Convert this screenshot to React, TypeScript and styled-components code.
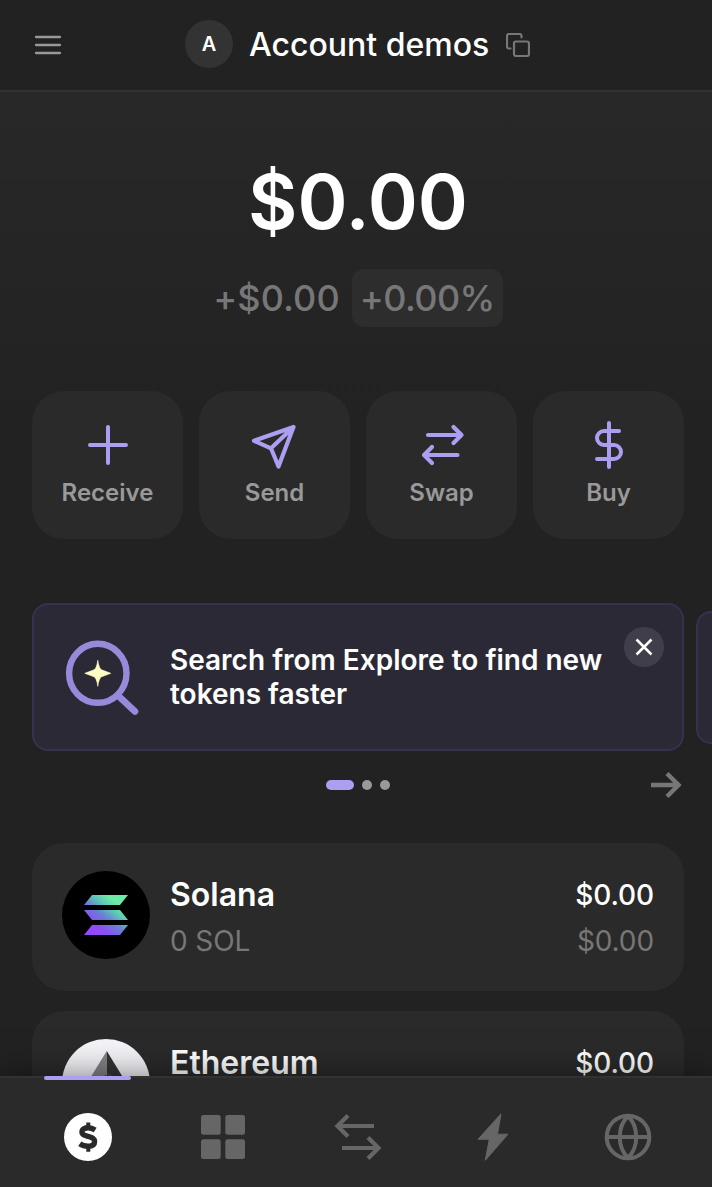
import React from 'react';
import styled, { createGlobalStyle } from 'styled-components';

const GlobalStyle = createGlobalStyle`
  * { box-sizing: border-box; }
  body { margin: 0; background: #222222; overflow: hidden; }
  button { border: 0; padding: 0; background: none; font: inherit; color: inherit; display: flex; }
  svg { display: block; flex: none; }
`;

const Screen = styled.div`
  width: 712px;
  height: 1187px;
  display: flex;
  flex-direction: column;
  overflow: hidden;
  background: #222222;
  color: #ffffff;
  font-family: Inter, "Liberation Sans", sans-serif;
`;

const Header = styled.header`
  height: 92px;
  flex: none;
  display: grid;
  grid-template-columns: 96px 1fr 96px;
  align-items: center;
  border-bottom: 2px solid #323232;
`;

const MenuButton = styled.button`
  padding-left: 34px;
`;

const Account = styled.div`
  display: flex;
  align-items: center;
  padding-left: 89px;
  padding-bottom: 2px;
`;

const Avatar = styled.span`
  width: 48px;
  height: 48px;
  border-radius: 50%;
  background: #333333;
  display: flex;
  align-items: center;
  justify-content: center;
  font-size: 20px;
  font-weight: 600;
`;

const AccountName = styled.h1`
  margin: 2px 17px 0 16px;
  width: 240px;
  white-space: nowrap;
  font-size: 32px;
  line-height: 40px;
  font-weight: 500;
`;

const CopyButton = styled.button`
  padding-top: 2px;
`;

const Content = styled.main`
  flex: 1;
  min-height: 0;
  overflow: hidden;
  padding: 0 28px 0 32px;
  background: linear-gradient(#282828, #222222 330px);
`;

const Balance = styled.section`
  display: flex;
  flex-direction: column;
  align-items: center;
  padding-top: 61px;
`;

const Total = styled.div`
  font-size: 76px;
  line-height: 96px;
  font-weight: 600;
`;

const Change = styled.div`
  margin-top: 20px;
  display: flex;
  align-items: center;
  gap: 12px;
  color: #777777;
  font-size: 36px;
  line-height: 58px;
  font-weight: 450;
  letter-spacing: 0.1px;
`;

const Percent = styled.span`
  width: 151px;
  text-align: center;
  border-radius: 12px;
  background: #2d2d2d;
  letter-spacing: -0.6px;
`;

const Actions = styled.div`
  margin-top: 64px;
  display: grid;
  grid-template-columns: repeat(4, 1fr);
  gap: 16px;
`;

const ActionCard = styled.button`
  height: 148px;
  border-radius: 32px;
  background: #2a2a2a;
  flex-direction: column;
  align-items: center;
  padding-top: 30px;
  color: #999999;
  font-size: 24px;
  line-height: 30px;
  font-weight: 600;

  svg { margin-bottom: 9px; }
`;

const Carousel = styled.div`
  margin-top: 64px;
  width: 680px;
  display: flex;
  align-items: center;
  gap: 12px;
`;

const Banner = styled.article`
  width: 652px;
  height: 148px;
  flex: none;
  display: flex;
  border: 2px solid #38304f;
  border-radius: 16px;
  background: #2c2937;
  padding: 22px 18px 0 30px;
`;

const NextBanner = styled.div`
  width: 600px;
  height: 133px;
  flex: none;
  border: 2px solid #38304f;
  border-radius: 15px;
  background: #2c2937;
`;

const BannerText = styled.p`
  margin: 16px 0 0 26px;
  width: 456px;
  font-size: 28px;
  line-height: 34px;
  font-weight: 600;
`;

const CloseButton = styled.button`
  width: 40px;
  height: 40px;
  border-radius: 50%;
  background: #413e4b;
  align-items: center;
  justify-content: center;
`;

const Pager = styled.div`
  height: 68px;
  display: grid;
  grid-template-columns: 1fr auto 1fr;
  align-items: center;
`;

const Dots = styled.div`
  grid-column: 2;
  display: flex;
  gap: 8px;
`;

const Dot = styled.span<{ $active?: boolean }>`
  width: ${(p) => (p.$active ? 28 : 10)}px;
  height: 10px;
  border-radius: 5px;
  background: ${(p) => (p.$active ? '#ab9ff2' : '#999999')};
`;

const NextButton = styled.button`
  justify-self: end;
`;

const TokenList = styled.div`
  margin-top: 24px;
  display: flex;
  flex-direction: column;
  gap: 20px;
`;

const TokenRow = styled.div`
  height: 148px;
  border-radius: 32px;
  background: #2a2a2a;
  display: flex;
  align-items: flex-start;
  padding: 28px 30px 0;
`;

const TokenInfo = styled.div<{ $end?: boolean }>`
  display: flex;
  flex-direction: column;
  gap: 10px;
  padding-top: 6px;
  ${(p) => (p.$end ? 'margin-left: auto; align-items: flex-end;' : 'margin-left: 20px;')}
`;

const TokenName = styled.div`
  font-size: 32px;
  line-height: 36px;
  font-weight: 600;
`;

const TokenValue = styled.div`
  font-size: 28px;
  line-height: 36px;
  font-weight: 500;
  letter-spacing: -0.1px;
`;

const TokenMuted = styled.div`
  font-size: 28px;
  line-height: 36px;
  font-weight: 400;
  letter-spacing: -0.1px;
  color: #777777;
`;

const Nav = styled.nav`
  position: relative;
  height: 111px;
  flex: none;
  display: grid;
  grid-template-columns: repeat(5, 135px);
  padding-left: 20px;
  border-top: 2px solid #323232;
  background: #2a2a2a;
  box-shadow: 0 0 32px rgba(0, 0, 0, 0.5);
`;

const Tab = styled.button`
  position: relative;
  justify-content: center;
  padding-top: 35px;
`;

const Indicator = styled.span`
  position: absolute;
  top: -2px;
  left: 24px;
  width: 87px;
  height: 4px;
  border-radius: 2px;
  background: #ab9ff2;
`;

const Stroke = ({ size = 48, width = 4, color = '#ab9ff2', cap = 'round', children }: {
  size?: number; width?: number; color?: string; cap?: 'round' | 'butt'; children: React.ReactNode;
}) => (
  <svg width={size} height={size} viewBox={`0 0 ${size} ${size}`} fill="none" stroke={color}
    strokeWidth={width} strokeLinecap={cap} strokeLinejoin={cap === 'round' ? 'round' : 'miter'}>
    {children}
  </svg>
);

const actions = [
  { label: 'Receive', icon: <path d="M24 6v36M6 24h36" /> },
  { label: 'Send', icon: <path d="M42.500 6L3 19.800L20 27.300L27.500 45.500zM20 27.300L42.500 6" strokeWidth="4.200" /> },
  { label: 'Swap', icon: <path d="M10 14H43.500M35.500 6l8 8l-8 8M39.500 34H6M14 26l-8 8l8 8" strokeWidth="4.200" /> },
  { label: 'Buy', icon: <path d="M24 2v44M34 10H19a7 7 0 0 0 0 14h10a7 7 0 0 1 0 14H12" /> },
];

const SolanaLogo = () => (
  <svg width="88" height="88" viewBox="0 0 88 88">
    <defs>
      <linearGradient id="sol" gradientUnits="userSpaceOnUse" x1="27" y1="66" x2="60" y2="24">
        <stop offset="0.1" stopColor="#9945ff" />
        <stop offset="0.28" stopColor="#8752f3" />
        <stop offset="0.48" stopColor="#6b7fd6" />
        <stop offset="0.66" stopColor="#5fc8b5" />
        <stop offset="0.82" stopColor="#6ceaa6" />
      </linearGradient>
    </defs>
    <circle cx="44" cy="44" r="44" fill="#000" />
    <path fill="url(#sol)" d="M30 24h36l-8 10H22zM22 39h36l8 10H30zM30 54h36l-8 10H22z" />
  </svg>
);

const EthereumLogo = () => (
  <svg width="88" height="88" viewBox="0 0 88 88">
    <circle cx="44" cy="44" r="44" fill="#f3f3f8" />
    <path fill="#828384" d="M44.800 12v22.500L24.500 45z" />
    <path fill="#343434" d="M44.800 12l20.200 33l-20.200-10.500z" />
    <path fill="#2f3030" d="M44.800 34.500l20.200 10.500l-20.200 12z" />
    <path fill="#5f5f60" d="M44.800 34.500L24.500 45l20.300 12z" />
    <path fill="#828384" d="M44.800 61v16L24.500 49z" />
    <path fill="#343434" d="M44.800 61v16L65 49z" />
  </svg>
);

const tokens = [
  { name: 'Solana', value: '$0.00', amount: '0 SOL', change: '$0.00', logo: <SolanaLogo /> },
  { name: 'Ethereum', value: '$0.00', logo: <EthereumLogo /> },
];

const SearchIllustration = () => (
  <svg width="80" height="92" viewBox="0 0 80 92" fill="none">
    <ellipse cx="33.800" cy="46.300" rx="28.700" ry="29.500" stroke="#978ada" strokeWidth="6.400" />
    <path d="M54.500 69L71 84.500" stroke="#978ada" strokeWidth="6.600" strokeLinecap="round" />
    <path fill="#ffffc4" stroke="#ffffc4" strokeWidth="0.600" d="M33.800 33.300Q35 41.700 37.600 42.800L46.800 46.300L37.600 49.800Q35 50.900 33.800 59.300Q32.600 50.900 30 49.800L20.800 46.300L30 42.800Q32.600 41.700 33.800 33.300z" />
  </svg>
);

export default function App() {
  return (
    <Screen>
      <GlobalStyle />
      <Header>
        <MenuButton aria-label="Menu">
          <Stroke size={28} width={2.3} color="#999999"><path d="M2 6h24M2 14h24M2 22h24" /></Stroke>
        </MenuButton>
        <Account>
          <Avatar>A</Avatar>
          <AccountName>Account demos</AccountName>
          <CopyButton aria-label="Copy address">
            <Stroke size={24} width={2.2} color="#777777">
              <rect x="8" y="8.500" width="15" height="14.500" rx="2" />
              <path d="M4.500 15.500H3a2 2 0 0 1-2-2V3a2 2 0 0 1 2-2H13.500a2 2 0 0 1 2 2V4.500" />
            </Stroke>
          </CopyButton>
        </Account>
      </Header>

      <Content>
        <Balance>
          <Total>$0.00</Total>
          <Change>
            <span>+$0.00</span>
            <Percent>+0.00%</Percent>
          </Change>
        </Balance>

        <Actions>
          {actions.map((a) => (
            <ActionCard key={a.label}>
              <Stroke>{a.icon}</Stroke>
              {a.label}
            </ActionCard>
          ))}
        </Actions>

        <Carousel>
          <Banner>
            <SearchIllustration />
            <BannerText>Search from Explore to find new tokens faster</BannerText>
            <CloseButton aria-label="Dismiss">
              <Stroke size={20} width={2.5} color="#ffffff" cap="butt"><path d="M2.500 2.500l15 15M17.500 2.500l-15 15" /></Stroke>
            </CloseButton>
          </Banner>
          <NextBanner />
        </Carousel>

        <Pager>
          <Dots>
            <Dot $active />
            <Dot />
            <Dot />
          </Dots>
          <NextButton aria-label="Next">
            <Stroke size={36} width={4.5} color="#777777" cap="butt">
              <path d="M3 18H31M19 6.500L30.500 18L19 29.500" />
            </Stroke>
          </NextButton>
        </Pager>

        <TokenList>
          {tokens.map((t) => (
            <TokenRow key={t.name}>
              {t.logo}
              <TokenInfo>
                <TokenName>{t.name}</TokenName>
                {t.amount && <TokenMuted>{t.amount}</TokenMuted>}
              </TokenInfo>
              <TokenInfo $end>
                <TokenValue>{t.value}</TokenValue>
                {t.change && <TokenMuted>{t.change}</TokenMuted>}
              </TokenInfo>
            </TokenRow>
          ))}
        </TokenList>
      </Content>

      <Nav>
        <Tab aria-label="Home">
          <Indicator />
          <svg width="48" height="48" viewBox="0 0 48 48" fill="none">
            <circle cx="24" cy="24" r="24" fill="#ffffff" />
            <path stroke="#2a2a2a" strokeWidth="5.400"
              d="M31.200 17C28.800 15.500 26.400 14.800 24.200 14.800C20.800 14.800 18 16.200 18 19C18 25 30.600 21.800 30.600 28.600C30.600 31.700 28 33.300 24 33.300C21 33.300 18 32.400 15.800 30.800" />
            <path stroke="#2a2a2a" strokeWidth="4" d="M24.300 9.500v5M24.300 33.500v5.300" />
          </svg>
        </Tab>
        <Tab aria-label="Collectibles">
          <svg width="48" height="48" viewBox="0 0 48 48" fill="#666666">
            <rect x="2" y="2" width="19.700" height="19.700" rx="2.500" />
            <rect x="26.300" y="2" width="19.700" height="19.700" rx="2.500" />
            <rect x="2" y="26.300" width="19.700" height="19.700" rx="2.500" />
            <rect x="26.300" y="26.300" width="19.700" height="19.700" rx="2.500" />
          </svg>
        </Tab>
        <Tab aria-label="Swap">
          <Stroke width={4.2} color="#666666" cap="butt">
            <path d="M40 13H3.500M14 2.500L3.500 13L14 23.500M8 35H44.500M34 24.500L44.500 35L34 45.500" />
          </Stroke>
        </Tab>
        <Tab aria-label="Activity">
          <svg width="48" height="48" viewBox="0 0 48 48" fill="#666666" stroke="#666666" strokeLinejoin="round">
            <path d="M32 .800L9 26.300H20.300L16.300 47.300L39 21.200H28.500z" />
          </svg>
        </Tab>
        <Tab aria-label="Explore">
          <Stroke color="#666666" cap="butt">
            <circle cx="24" cy="24" r="21.300" />
            <path d="M3 24h42M24 3C13 14 13 34 24 45M24 3C35 14 35 34 24 45" />
          </Stroke>
        </Tab>
      </Nav>
    </Screen>
  );
}
